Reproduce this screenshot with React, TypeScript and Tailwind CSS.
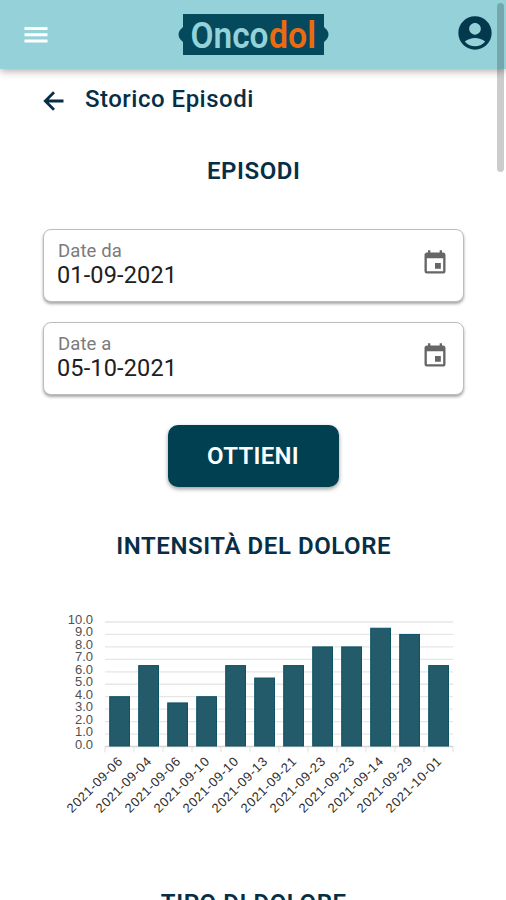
import { MdAccountCircle, MdEvent } from "react-icons/md";

const episodes = [
  { date: "2021-09-06", value: 4 },
  { date: "2021-09-04", value: 6.5 },
  { date: "2021-09-06", value: 3.5 },
  { date: "2021-09-10", value: 4 },
  { date: "2021-09-10", value: 6.5 },
  { date: "2021-09-13", value: 5.5 },
  { date: "2021-09-21", value: 6.5 },
  { date: "2021-09-23", value: 8 },
  { date: "2021-09-23", value: 8 },
  { date: "2021-09-14", value: 9.5 },
  { date: "2021-09-29", value: 9 },
  { date: "2021-10-01", value: 6.5 },
];

const ticks = [10, 9, 8, 7, 6, 5, 4, 3, 2, 1, 0];

// chart geometry
const left = 105;
const right = 453;
const base = 146.5;
const unit = 12.45;
const slot = (right - left) / episodes.length;

const MenuIcon = () => (
  <svg width="24" height="18" viewBox="0 0 24 18" className="mt-[26px]">
    <path d="M0.500 2.500H23.500M0.500 8.700H23.500M0.500 15H23.500" stroke="#fff" strokeWidth="3" />
  </svg>
);

const BackIcon = () => (
  <svg width="21" height="20" viewBox="0 0 21 20" fill="none" className="mt-[6px]">
    <path d="M20.500 10H2.500M11 1.300L2.300 10L11 18.700" stroke="currentColor" strokeWidth="2.800" />
  </svg>
);

const Logo = () => (
  <svg width="152" height="42" viewBox="0 0 152 42" className="mt-[13px] ml-[4px]">
    <path
      d="M5 1H146V14L149 17C151 20 151 23 149 26L146 29V42H5V29L2 26C0 23 0 20 2 17L5 14Z"
      fill="#04495c"
    />
    <g className="font-[Roboto]" fontSize="36" fontWeight="600">
      <text x="12.500" y="34.500" textLength="78" lengthAdjust="spacingAndGlyphs" fill="#94d1d8">
        Onco
      </text>
      <text x="91" y="34.500" textLength="47" lengthAdjust="spacingAndGlyphs" fill="#ec6a10">
        dol
      </text>
    </g>
  </svg>
);

const DateField = ({ label, value }: { label: string; value: string }) => (
  <div className="flex h-[73px] justify-between rounded-lg border border-[#bdbdbd] bg-white pl-[14px] pr-[14px] shadow-[0_2px_3px_rgba(0,0,0,0.35)]">
    <div className="flex flex-col pt-[10px]">
      <span className="text-[18.5px] leading-[22px] tracking-[0.1px] text-[#7b7b7b]">{label}</span>
      <span className="-ml-px text-[23.5px] leading-[27px] tracking-[0.15px] text-[#202020]">{value}</span>
    </div>
    <MdEvent className="mt-[19px] h-[28px] w-[28px] text-[#666]" />
  </div>
);

const EpisodesChart = () => (
  <svg width="506" height="240" viewBox="0 0 506 240" className="block font-['Liberation_Sans']">
    {ticks.map((tick) => (
      <g key={tick}>
        <line
          x1={left}
          x2={right}
          y1={base - tick * unit}
          y2={base - tick * unit}
          stroke={tick === 0 ? "#d4d4d4" : "#e6e6e6"}
          strokeWidth="1.3"
        />
        <text x="93" y={base - tick * unit + 2} textAnchor="end" fontSize="13" fill="#505050">
          {tick.toFixed(1)}
        </text>
      </g>
    ))}
    {episodes.map((episode, i) => {
      const x = left + i * slot;
      return (
        <g key={i}>
          <line x1={x} x2={x} y1={base} y2={base + 6} stroke="#e0e0e0" />
          <rect
            x={x + 4.7}
            y={base - episode.value * unit}
            width="19.800"
            height={episode.value * unit - 0.5}
            fill="#235b6a"
            stroke="#0d5366"
            strokeWidth="1"
          />
          <text
            transform={`translate(${x + 18} ${base + 16}) rotate(-45)`}
            textAnchor="end"
            fontSize="13"
            textLength="72"
            fill="#303030"
          >
            {episode.date}
          </text>
        </g>
      );
    })}
    <line x1={right} x2={right} y1={base} y2={base + 6} stroke="#e0e0e0" />
  </svg>
);

const Heading = ({ children }: { children: string }) => (
  <h2 className="pl-[1.5px] text-center text-[24px] leading-[28px] font-semibold tracking-[0.57px]">{children}</h2>
);

export default function App() {
  return (
    <div className="relative h-[900px] w-[506px] overflow-hidden bg-white font-[Roboto,sans-serif] text-[#062f47]">
      <header className="flex h-[69px] items-start justify-between bg-[#94d1d8] pl-[24px] pr-[11px] shadow-[0_2px_8px_rgba(70,30,30,0.4)]">
        <MenuIcon />
        <Logo />
        <MdAccountCircle className="mt-[13px] h-[40px] w-[40px] text-[#04384c]" />
      </header>

      <div className="flex h-[60px] items-start pt-[16px] pl-[43px]">
        <BackIcon />
        <h1 className="ml-[21px] text-[24px] leading-[28px] font-medium tracking-[0.5px]">Storico Episodi</h1>
      </div>

      <main>
        <div className="pt-[28px]">
          <Heading>EPISODI</Heading>
        </div>
        <div className="mt-[44px] flex flex-col gap-[20px] pl-[43px] pr-[42px]">
          <DateField label="Date da" value="01-09-2021" />
          <DateField label="Date a" value="05-10-2021" />
        </div>
        <div className="mt-[30px] flex justify-center">
          <button className="h-[62px] w-[171px] rounded-[10px] bg-[#014051] text-[24px] font-semibold tracking-[0.3px] text-white shadow-[0_2px_4px_rgba(0,0,0,0.4)]">
            OTTIENI
          </button>
        </div>
        <div className="mt-[45px]">
          <Heading>INTENSITÀ DEL DOLORE</Heading>
        </div>
        <div className="mt-[40px]">
          <EpisodesChart />
        </div>
        <div className="mt-[49px]">
          <Heading>TIPO DI DOLORE</Heading>
        </div>
      </main>

      {/* scroll thumb */}
      <div className="absolute top-[3px] right-[2px] h-[169px] w-[7px] rounded-full bg-black/20" />
    </div>
  );
}
